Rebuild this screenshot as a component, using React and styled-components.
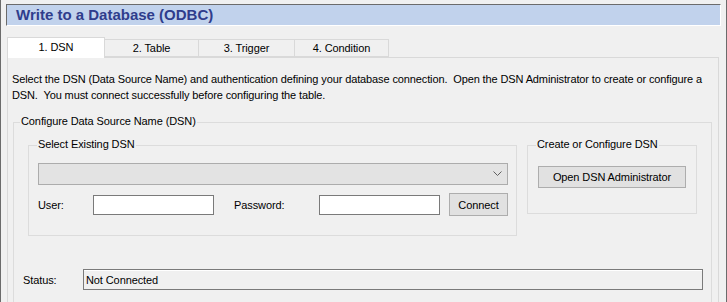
import React from "react";
import styled, { createGlobalStyle } from "styled-components";

const Global = createGlobalStyle`
  html, body { margin: 0; padding: 0; background: #f0f0f0; }
  body { font-family: "Liberation Sans", Arial, sans-serif; font-size: 11px; color: #000; }
  * { box-sizing: border-box; }
`;

const Window = styled.div`
  width: 727px;
  height: 302px;
  overflow: hidden;
  background: #f0f0f0;
  border-left: 1px solid #6b6b6b;
  border-right: 1px solid #6b6b6b;
  padding: 4px 5px 0 5px;
  display: flex;
  flex-direction: column;
`;

const Header = styled.div`
  height: 23px;
  background: #c1d2ec;
  border-top: 1px solid #6b6b6b;
  border-left: 1px solid #6b6b6b;
  border-bottom: 1px solid #ffffff;
  border-right: 1px solid #ffffff;
  padding-left: 9px;
  display: flex;
  align-items: center;
`;

const Title = styled.h1`
  margin: 0;
  font-size: 15px;
  font-weight: bold;
  color: #2f3d8c;
  line-height: 20px;
`;

const Tabs = styled.div`
  margin: 11px 1px 0 1px;
  display: flex;
  flex-direction: column;
  flex: 1;
`;

const TabList = styled.div`
  display: flex;
  align-items: flex-end;
  height: 20px;
  position: relative;
  z-index: 1;
`;

const Tab = styled.div`
  width: ${(p) => p.$w}px;
  height: ${(p) => (p.$active ? 21 : 18)}px;
  margin-bottom: ${(p) => (p.$active ? -1 : 0)}px;
  background: ${(p) => (p.$active ? "#ffffff" : "#f0f0f0")};
  border: 1px solid #d9d9d9;
  border-bottom: ${(p) => (p.$active ? "none" : "1px solid #d9d9d9")};
  margin-left: ${(p) => (p.$first ? 0 : -1)}px;
  font-size: 11px;
  letter-spacing: -0.1px;
  display: flex;
  align-items: center;
  justify-content: center;
  padding-bottom: ${(p) => (p.$active ? 2 : 0)}px;
`;

const Panel = styled.div`
  flex: 1;
  border: 1px solid #d9d9d9;
  border-bottom: none;
  margin-right: 1px;
  padding: 13px 0 0 4px;
`;

const Description = styled.p`
  margin: 0;
  font-size: 11px;
  letter-spacing: -0.12px;
  line-height: 16px;
  width: 695px;
`;

const GroupBox = styled.fieldset`
  margin: ${(p) => p.$margin || 0};
  padding: ${(p) => p.$padding || 0};
  border: 1px solid #dcdcdc;
  min-width: 0;
  width: ${(p) => (p.$w ? `${p.$w}px` : "auto")};
  height: ${(p) => (p.$h ? `${p.$h}px` : "auto")};
`;

const Legend = styled.legend`
  font-size: 11px;
  letter-spacing: -0.1px;
  line-height: 14px;
  padding: 0 1px 2px 1px;
  margin-left: ${(p) => p.$ml || 0}px;
`;

const GroupRow = styled.div`
  display: flex;
  gap: 10px;
  margin: 7px 0 0 8px;
  align-items: flex-start;
`;

const Combo = styled.div`
  width: 470px;
  height: 22px;
  margin-top: 10px;
  background: #e3e3e3;
  border: 1px solid #acacac;
  display: flex;
  align-items: center;
  justify-content: flex-end;
  padding-right: 5px;
`;

const FieldRow = styled.div`
  display: flex;
  align-items: center;
  margin-top: 8px;
`;

const Label = styled.span`
  font-size: 11px;
  letter-spacing: -0.1px;
  width: ${(p) => p.$w}px;
  flex: none;
`;

const TextInput = styled.div`
  width: 121px;
  height: 20px;
  background: #ffffff;
  border: 1px solid #7a7a7a;
  margin-right: ${(p) => p.$mr || 0}px;
`;

const Button = styled.button`
  width: ${(p) => p.$w}px;
  height: ${(p) => p.$h}px;
  margin: ${(p) => p.$margin || 0};
  background: #e1e1e1;
  border: 1px solid #adadad;
  font-family: "Liberation Sans", Arial, sans-serif;
  font-size: 11px;
  letter-spacing: -0.1px;
  color: #000;
  padding: 0;
  display: flex;
  align-items: center;
  justify-content: center;
`;

const StatusRow = styled.div`
  display: flex;
  align-items: center;
  margin: 33px 0 0 3px;
`;

const StatusField = styled.div`
  width: 620px;
  height: 21px;
  border: 1px solid #7a7a7a;
  box-shadow: inset 0 1px 0 #ffffff;
  padding-left: 2px;
  font-size: 11px;
  letter-spacing: -0.1px;
  display: flex;
  align-items: center;
`;

const Chevron = () => (
  <svg width="9" height="6" viewBox="0 0 9 6">
    <polyline points="0.5,0.5 4.5,4.5 8.5,0.5" fill="none" stroke="#606060" strokeWidth="1" />
  </svg>
);

const tabs = [
  { label: "1. DSN", w: 98 },
  { label: "2. Table", w: 95 },
  { label: "3. Trigger", w: 97 },
  { label: "4. Condition", w: 95 },
];

export default function App() {
  return (
    <>
      <Global />
      <Window>
        <Header>
          <Title>Write to a Database (ODBC)</Title>
        </Header>
        <Tabs>
          <TabList>
            {tabs.map((t, i) => (
              <Tab key={t.label} $w={t.w} $active={i === 0} $first={i === 0}>
                {t.label}
              </Tab>
            ))}
          </TabList>
          <Panel>
            <Description>
              Select the DSN (Data Source Name) and authentication defining your database connection.&nbsp; Open the DSN Administrator to create or configure a DSN.&nbsp; You must connect successfully before configuring the table.
            </Description>
            <GroupBox $margin="11px 0 0 1px" $padding="0 0 0 6px" $w={699} $h={200}>
              <Legend>Configure Data Source Name (DSN)</Legend>
              <GroupRow>
                <GroupBox $padding="0 8px 0 9px" $w={489} $h={99}>
                  <Legend $ml={-1}>Select Existing DSN</Legend>
                  <Combo>
                    <Chevron />
                  </Combo>
                  <FieldRow>
                    <Label $w={55}>User:</Label>
                    <TextInput $mr={20} />
                    <Label $w={85}>Password:</Label>
                    <TextInput $mr={9} />
                    <Button $w={59} $h={23}>Connect</Button>
                  </FieldRow>
                </GroupBox>
                <GroupBox $padding="0 0 0 10px" $w={170} $h={77}>
                  <Legend $ml={-2}>Create or Configure DSN</Legend>
                  <Button $w={148} $h={22} $margin="13px 0 0 0">Open DSN Administrator</Button>
                </GroupBox>
              </GroupRow>
              <StatusRow>
                <Label $w={60}>Status:</Label>
                <StatusField>Not Connected</StatusField>
              </StatusRow>
            </GroupBox>
          </Panel>
        </Tabs>
      </Window>
    </>
  );
}
